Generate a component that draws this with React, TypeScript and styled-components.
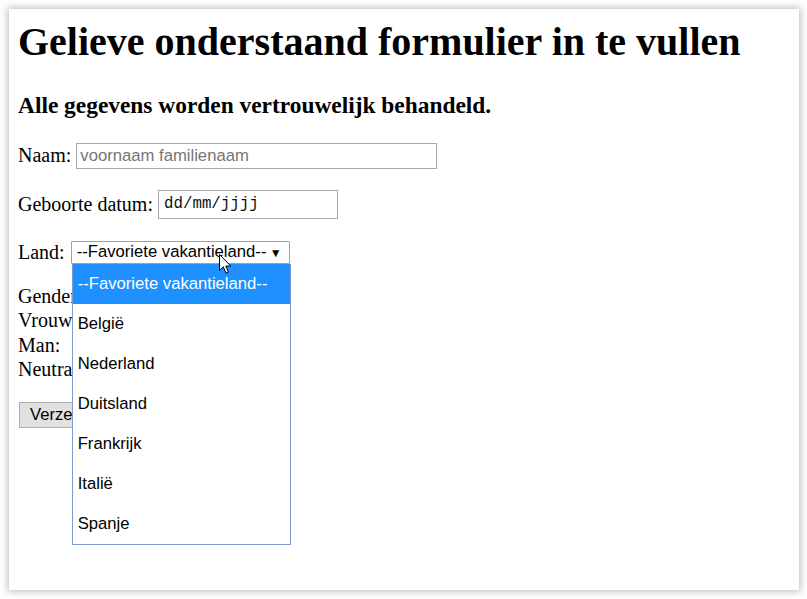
import React from "react";
import styled, { createGlobalStyle } from "styled-components";

const Global = createGlobalStyle`
  html, body { margin: 0; padding: 0; background: #ffffff; }
  body { width: 807px; height: 599px; overflow: hidden; }
  #root { width: 807px; height: 599px; }
`;

const Page = styled.div`
  box-sizing: border-box;
  width: 807px;
  height: 599px;
  padding: 9px 8px 9px 9px;
  background: #fdfdfd;
`;

const Window = styled.div`
  box-sizing: border-box;
  width: 790px;
  height: 581px;
  background: #ffffff;
  box-shadow: 0 0 7px 1px rgba(0, 0, 0, 0.28);
  padding: 10px 10px 10px 9px;
  font-family: "Liberation Serif", "Times New Roman", serif;
  font-size: 20px;
  color: #000;
`;

const Title = styled.h1`
  margin: 0 0 27px;
  font-size: 40px;
  font-weight: bold;
  line-height: 46px;
`;

const Subtitle = styled.h3`
  margin: 0 0 23.5px;
  font-size: 23.4px;
  font-weight: bold;
  line-height: 27px;
`;

const Form = styled.form`
  display: flex;
  flex-direction: column;
`;

const Row = styled.div<{ $gap: number; $h: number }>`
  display: flex;
  align-items: center;
  gap: 5px;
  height: ${(p) => p.$h}px;
  margin-top: ${(p) => p.$gap}px;
  white-space: nowrap;
`;

const TextBox = styled.div<{ $w: number; $h: number }>`
  box-sizing: border-box;
  width: ${(p) => p.$w}px;
  height: ${(p) => p.$h}px;
  border: 1px solid #a9a9a9;
  display: flex;
  align-items: center;
`;

const Placeholder = styled.span`
  padding-left: 3px;
  font-family: "Liberation Sans", Arial, sans-serif;
  font-size: 16.67px;
  color: #757575;
`;

const DateText = styled.span`
  padding-left: 5px;
  font-family: "Liberation Mono", "Courier New", monospace;
  font-size: 15.8px;
  color: #111;
`;

const SelectWrap = styled.div`
  position: relative;
  margin-left: 1px;
`;

const SelectBox = styled.div`
  box-sizing: border-box;
  width: 219px;
  height: 23px;
  border: 1px solid #7ba6e6;
  border-radius: 1px;
  display: flex;
  align-items: center;
  justify-content: space-between;
  padding: 0 7px 0 5px;
  font-family: "Liberation Sans", Arial, sans-serif;
  font-size: 16.67px;
  color: #000;
`;

const Arrow = styled.span`
  font-size: 12px;
  line-height: 1;
  margin-top: 1px;
`;

const Dropdown = styled.ul`
  position: absolute;
  top: 100%;
  left: 1px;
  z-index: 2;
  box-sizing: border-box;
  width: 219px;
  height: 281px;
  margin: 0;
  padding: 0;
  list-style: none;
  background: #fff;
  border: 1px solid #7a9ad0;
  border-top: none;
  font-family: "Liberation Sans", Arial, sans-serif;
  font-size: 16.67px;
`;

const Option = styled.li<{ $active?: boolean }>`
  height: 40px;
  display: flex;
  align-items: center;
  padding-left: 5px;
  background: ${(p) => (p.$active ? "#1e90ff" : "transparent")};
  color: ${(p) => (p.$active ? "#ffffff" : "#000000")};
`;

const Cursor = styled.svg`
  position: absolute;
  left: 148px;
  top: 13px;
  z-index: 3;
`;

const GenderBlock = styled.div`
  margin-top: 20px;
  line-height: 24.5px;
`;

const GenderLine = styled.div`
  display: flex;
  align-items: center;
  height: 24.5px;
`;

const Radio = styled.span`
  box-sizing: border-box;
  display: inline-block;
  width: 16px;
  height: 16px;
  margin-left: 12px;
  border: 1px solid #767676;
  border-radius: 50%;
`;

const Button = styled.div`
  box-sizing: border-box;
  align-self: flex-start;
  margin-top: 20px;
  margin-left: 1px;
  height: 26px;
  padding: 0 10px;
  display: flex;
  align-items: center;
  background: #e1e1e1;
  border: 1px solid #adadad;
  font-family: "Liberation Sans", Arial, sans-serif;
  font-size: 16.67px;
  color: #000;
`;

const countries = [
  "--Favoriete vakantieland--",
  "België",
  "Nederland",
  "Duitsland",
  "Frankrijk",
  "Italië",
  "Spanje",
];

export default function App() {
  return (
    <Page>
      <Global />
      <Window>
        <Title>Gelieve onderstaand formulier in te vullen</Title>
        <Subtitle>Alle gegevens worden vertrouwelijk behandeld.</Subtitle>
        <Form>
          <Row $gap={0} $h={26}>
            <span>Naam:</span>
            <TextBox $w={361} $h={26}>
              <Placeholder>voornaam familienaam</Placeholder>
            </TextBox>
          </Row>
          <Row $gap={21.5} $h={28.5}>
            <span>Geboorte datum:</span>
            <TextBox $w={180} $h={28.5}>
              <DateText>dd/mm/jjjj</DateText>
            </TextBox>
          </Row>
          <Row $gap={22} $h={23}>
            <span>Land:</span>
            <SelectWrap>
              <SelectBox>
                <span>--Favoriete vakantieland--</span>
                <Arrow>▼</Arrow>
              </SelectBox>
              <Dropdown>
                {countries.map((c, i) => (
                  <Option key={c} $active={i === 0}>
                    {c}
                  </Option>
                ))}
              </Dropdown>
              <Cursor width="13" height="21" viewBox="0 0 13 21">
                <path
                  d="M0.5 0.5 L0.5 16.5 L4.3 12.8 L7 19.2 L9.4 18.2 L6.8 12 L11.8 12 Z"
                  fill="#ffffff"
                  stroke="#000000"
                  strokeWidth="1"
                  strokeLinejoin="miter"
                />
              </Cursor>
            </SelectWrap>
          </Row>
          <GenderBlock>
            <GenderLine>Gender:</GenderLine>
            <GenderLine>
              Vrouw:<Radio />
            </GenderLine>
            <GenderLine>
              Man:<Radio />
            </GenderLine>
            <GenderLine>
              Neutraal:<Radio />
            </GenderLine>
          </GenderBlock>
          <Button>Verzenden</Button>
        </Form>
      </Window>
    </Page>
  );
}
